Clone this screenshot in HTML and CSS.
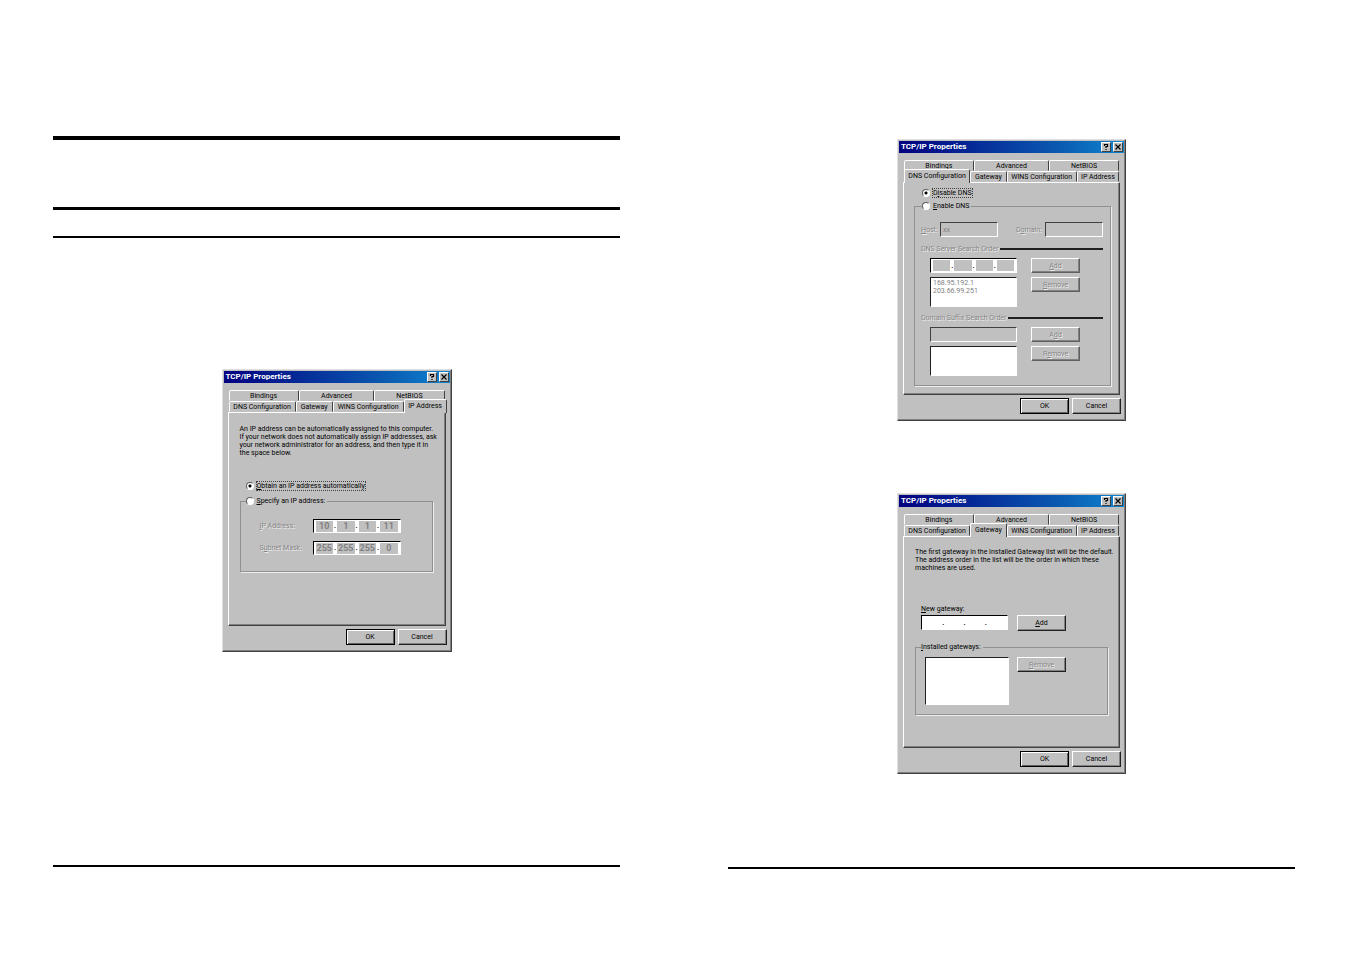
FILE: index.html
```
<!DOCTYPE html>
<html lang="en">
<head>
<meta charset="utf-8">
<title>TCP/IP Properties</title>
<link rel="stylesheet" href="styles.css">
</head>
<body>
<main class="spread">
  <section class="page page-left">
    <hr class="rule rule-thick">
    <hr class="rule rule-medium">
    <hr class="rule rule-thin">

    <article class="dialog dialog-ip">
      <header class="titlebar">
        <h2 class="title">TCP/IP Properties</h2>
        <button class="caption" aria-label="Help"><svg viewBox="0 0 8 8"><path d="M2.500 3V1.500h3v2h-1.500V5M4 6v1" /></svg></button>
        <button class="caption" aria-label="Close"><svg viewBox="0 0 8 8"><path d="M1.500 1.500l5 5M6.500 1.500l-5 5" /></svg></button>
      </header>
      <div class="tabs">
        <div class="tab-row"><button class="tab w70">Bindings</button><button class="tab w76">Advanced</button><button class="tab w70">NetBIOS</button></div>
        <div class="tab-row"><button class="tab w67">DNS Configuration</button><button class="tab w36">Gateway</button><button class="tab w71">WINS Configuration</button><button class="tab w42 selected">IP Address</button></div>
      </div>
      <div class="panel panel-ip">
        <p class="text">An IP address can be automatically assigned to this computer.<br>If your network does not automatically assign IP addresses, ask<br>your network administrator for an address, and then type it in<br>the space below.</p>
        <label class="option"><input type="radio" name="ip" checked><span class="focus"><u>O</u>btain an IP address automatically</span></label>
        <fieldset class="group">
          <legend><label class="option"><input type="radio" name="ip"><span><u>S</u>pecify an IP address:</span></label></legend>
          <div class="address-grid">
            <label class="off" for="ip1"><u>I</u>P Address:</label>
            <div class="ip ip-off"><input id="ip1" value="10" disabled><b>.</b><input aria-label="IP octet 2" value="1" disabled><b>.</b><input aria-label="IP octet 3" value="1" disabled><b>.</b><input aria-label="IP octet 4" value="11" disabled></div>
            <label class="off" for="mask1">S<u>u</u>bnet Mask:</label>
            <div class="ip ip-off"><input id="mask1" value="255" disabled><b>.</b><input aria-label="Mask octet 2" value="255" disabled><b>.</b><input aria-label="Mask octet 3" value="255" disabled><b>.</b><input aria-label="Mask octet 4" value="0" disabled></div>
          </div>
        </fieldset>
      </div>
      <footer class="actions"><button class="btn btn-default">OK</button><button class="btn">Cancel</button></footer>
    </article>

    <hr class="rule rule-foot">
  </section>

  <section class="page page-right">
    <article class="dialog dialog-dns">
      <header class="titlebar">
        <h2 class="title">TCP/IP Properties</h2>
        <button class="caption" aria-label="Help"><svg viewBox="0 0 8 8"><path d="M2.500 3V1.500h3v2h-1.500V5M4 6v1" /></svg></button>
        <button class="caption" aria-label="Close"><svg viewBox="0 0 8 8"><path d="M1.500 1.500l5 5M6.500 1.500l-5 5" /></svg></button>
      </header>
      <div class="tabs">
        <div class="tab-row"><button class="tab w70">Bindings</button><button class="tab w76">Advanced</button><button class="tab w70">NetBIOS</button></div>
        <div class="tab-row"><button class="tab w67 selected">DNS Configuration</button><button class="tab w36">Gateway</button><button class="tab w71">WINS Configuration</button><button class="tab w42">IP Address</button></div>
      </div>
      <div class="panel panel-dns">
        <label class="option"><input type="radio" name="dns" checked><span class="focus">D<u>i</u>sable DNS</span></label>
        <fieldset class="group">
          <legend><label class="option"><input type="radio" name="dns"><span><u>E</u>nable DNS</span></label></legend>
          <div class="host-row">
            <label class="off" for="host"><u>H</u>ost:</label><input class="field field-off" id="host" value="xx" disabled>
            <label class="off label-domain" for="domain">D<u>o</u>main:</label><input class="field field-off" id="domain" disabled>
          </div>
          <div class="section off"><span>DNS Server Search Order</span><i></i></div>
          <div class="list-grid">
            <div class="ip ip-off"><input aria-label="DNS octet 1" disabled><b>.</b><input aria-label="DNS octet 2" disabled><b>.</b><input aria-label="DNS octet 3" disabled><b>.</b><input aria-label="DNS octet 4" disabled></div>
            <button class="btn off" disabled><u>A</u>dd</button>
            <ul class="list"><li>168.95.192.1</li><li>203.66.99.251</li></ul>
            <button class="btn off" disabled><u>R</u>emove</button>
          </div>
          <div class="section off"><span>Domain Suffix Search Order</span><i></i></div>
          <div class="list-grid">
            <input class="field field-off" aria-label="Domain suffix" disabled>
            <button class="btn off" disabled>A<u>d</u>d</button>
            <ul class="list"></ul>
            <button class="btn off" disabled>R<u>e</u>move</button>
          </div>
        </fieldset>
      </div>
      <footer class="actions"><button class="btn btn-default">OK</button><button class="btn">Cancel</button></footer>
    </article>

    <article class="dialog dialog-gateway">
      <header class="titlebar">
        <h2 class="title">TCP/IP Properties</h2>
        <button class="caption" aria-label="Help"><svg viewBox="0 0 8 8"><path d="M2.500 3V1.500h3v2h-1.500V5M4 6v1" /></svg></button>
        <button class="caption" aria-label="Close"><svg viewBox="0 0 8 8"><path d="M1.500 1.500l5 5M6.500 1.500l-5 5" /></svg></button>
      </header>
      <div class="tabs">
        <div class="tab-row"><button class="tab w70">Bindings</button><button class="tab w76">Advanced</button><button class="tab w70">NetBIOS</button></div>
        <div class="tab-row"><button class="tab w67">DNS Configuration</button><button class="tab w36 selected">Gateway</button><button class="tab w71">WINS Configuration</button><button class="tab w42">IP Address</button></div>
      </div>
      <div class="panel panel-gateway">
        <p class="text">The first gateway in the Installed Gateway list will be the default.<br>The address order in the list will be the order in which these<br>machines are used.</p>
        <div class="new-gateway">
          <label for="gw1"><u>N</u>ew gateway:</label>
          <div class="entry">
            <div class="ip"><input id="gw1"><b>.</b><input aria-label="Gateway octet 2"><b>.</b><input aria-label="Gateway octet 3"><b>.</b><input aria-label="Gateway octet 4"></div>
            <button class="btn"><u>A</u>dd</button>
          </div>
        </div>
        <fieldset class="group">
          <legend><u>I</u>nstalled gateways:</legend>
          <div class="installed">
            <ul class="list"></ul>
            <button class="btn off" disabled><u>R</u>emove</button>
          </div>
        </fieldset>
      </div>
      <footer class="actions"><button class="btn btn-default">OK</button><button class="btn">Cancel</button></footer>
    </article>

    <hr class="rule rule-foot">
  </section>
</main>
</body>
</html>
```
FILE: styles.css
```
* { box-sizing: border-box; }
body { margin: 0; background: #fff; color: #000; font-family: Roboto, "Liberation Sans", sans-serif; font-size: 7px; line-height: 8px; }
button, input { font: inherit; color: inherit; margin: 0; padding: 0; border-radius: 0; min-width: 0; }
ul, p, h2 { margin: 0; padding: 0; list-style: none; }
u { text-decoration: underline; text-decoration-thickness: 1px; text-underline-offset: 1px; }

.spread { display: grid; grid-template-columns: 1fr 1fr; min-height: 100vh; }
.page { display: flex; flex-direction: column; padding: 136px 55px 87px 53px; }
.page-right { padding-top: 139px; padding-bottom: 85px; }
.rule { width: 100%; margin: 0; border: 0; background: #000; flex: none; }
.rule-thick { height: 4px; }
.rule-medium { height: 3px; margin-top: 67px; }
.rule-thin { height: 2px; margin-top: 26px; }
.rule-foot { height: 2px; margin-top: auto; }

.dialog { display: flex; flex-direction: column; width: 229px; margin: 0 auto; padding: 1px; background: #c0c0c0; border: 1px solid; border-color: #dfdfdf #404040 #404040 #dfdfdf; box-shadow: inset -1px -1px #808080; }
.dialog-ip { width: 230px; margin-top: 131px; }
.dialog-gateway { margin-top: 72px; }

.titlebar { display: flex; align-items: center; height: 12px; padding: 0 1px 0 2px; background: linear-gradient(90deg, #000080, #0a58b0 70%, #1084d0); color: #fff; }
.title { flex: 1; font-size: 8px; font-weight: bold; }
.caption { width: 10px; height: 10px; margin-left: 1px; background: #c0c0c0; border: 1px solid; border-color: #fff #404040 #404040 #fff; }
.caption + .caption { margin-left: 2px; }
.caption svg { display: block; width: 8px; height: 8px; fill: none; stroke: #000; stroke-width: 1.2; }

.tabs { padding: 7px 5px 0 5px; }
.tab-row { display: flex; height: 11px; }
.tab { flex: 1 1 0; background: #c0c0c0; border: 1px solid; border-color: #fff #404040 transparent #fff; border-radius: 2px 2px 0 0; white-space: nowrap; display: flex; justify-content: center; align-items: center; }
.w70 { flex-grow: 70; }
.w76 { flex-grow: 76; }
.w67 { flex-grow: 67; }
.w36 { flex-grow: 36; }
.w71 { flex-grow: 71; }
.w42 { flex-grow: 42; }
.selected { position: relative; margin: -2px 0 -1px; padding-bottom: 1px; border-bottom: 0; }
.w42.selected { margin-right: -2px; }

.panel { display: flex; flex-direction: column; margin: 0 4px; border: 1px solid; border-color: #fff #404040 #404040 #fff; box-shadow: inset -1px -1px #808080; }
.panel-ip { padding: 12px 12px 53px 11px; }
.panel-dns { padding: 6px 8px 8px 10px; }
.panel-gateway { padding: 11px 11px 32px 11px; }
.text { white-space: nowrap; }

.option { display: flex; align-items: center; gap: 3px; height: 8px; white-space: nowrap; }
.option input { appearance: none; width: 8px; height: 8px; border: 1px solid; border-color: #606060 #fff #fff #606060; border-radius: 50%; background: #fff; }
.option input:checked { background: radial-gradient(circle, #000 0 1px, #fff 2px); }
.focus { outline: 1px dotted #404040; }
.panel > .option { margin-left: 6px; }
.panel-ip > .option { margin-top: 25px; }
.panel-dns > .option { margin-left: 8px; }

.group { margin: 7px 0 0; padding: 0; border: 1px solid #909090; box-shadow: 1px 1px #eee; min-width: 0; }
.group legend { margin-left: 5px; padding: 0 2px 0 0; background: #c0c0c0; height: 8px; }
.off { color: #868686; text-shadow: 1px 1px #eee; white-space: nowrap; }

.address-grid { display: grid; grid-template-columns: 53px 88px; row-gap: 8px; align-items: center; padding: 14px 0 16px 19px; }
.ip { display: flex; align-items: center; height: 14px; padding: 1px 2px; background: #fff; border: 1px solid; border-color: #000 #fff #fff #000; }
.ip input { flex: 1 1 0; width: 0; height: 11px; border: 0; background: #fff; text-align: center; outline: 0; }
.ip b { width: 4px; text-align: center; }
.ip-off input { background: #c0c0c0; color: #808080; font-size: 9px; font-weight: bold; }

.panel-dns .group { margin-top: 5px; }
.panel-dns .group legend { margin-left: 7px; }
.host-row { display: grid; grid-template-columns: 19px 58px 18px 29px 58px; justify-content: start; align-items: center; padding: 12px 7px 0 6px; }
.host-row .label-domain { grid-column: 4; }
.field { width: 100%; height: 15px; padding: 2px; border: 1px solid; border-color: #404040 #fff #fff #404040; background: #fff; }
.field-off { background: #c0c0c0; color: #808080; }
.section { display: flex; align-items: center; gap: 2px; padding: 0 7px 0 6px; margin-top: 8px; height: 8px; }
.section i { flex: 1; height: 2px; background: #202020; }
.list-grid { display: grid; grid-template-columns: 87px 49px; gap: 4px 14px; align-items: start; padding: 5px 0 0 15px; }
.list-grid .ip { height: 15px; }
.list-grid + .section { margin-top: 7px; }
.list-grid:last-child { padding-bottom: 9px; }
.list { height: 30px; padding: 1px 2px; background: #fff; border: 1px solid; border-color: #202020 #fff #fff #202020; color: #808080; }

.btn { width: 49px; height: 16px; background: #c0c0c0; border: 1px solid; border-color: #fff #202020 #202020 #fff; box-shadow: inset -1px -1px #808080; text-align: center; }
.btn.off { height: 15px; color: #868686; border-color: #fff #606060 #606060 #fff; }
.btn-default { border-color: #000; box-shadow: inset 1px 1px #fff, inset -1px -1px #606060; }
.actions { display: flex; justify-content: flex-end; gap: 3px; padding: 3px 3px 5px; }

.new-gateway { display: flex; flex-direction: column; gap: 2px; padding-left: 6px; margin-top: 33px; }
.entry { display: flex; gap: 9px; }
.entry .ip { width: 87px; height: 15px; }
.panel-gateway .group { margin-top: 12px; }
.installed { display: flex; gap: 8px; padding: 6px 0 9px 9px; }
.installed .list { width: 84px; height: 48px; }
.installed .btn.off { border-color: #fff #202020 #202020 #fff; }
```
